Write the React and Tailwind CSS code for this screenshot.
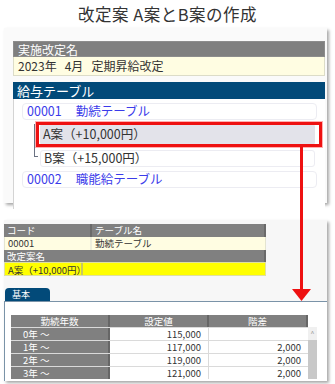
const FONT = { fontFamily: '"Noto Sans CJK JP", "Noto Sans", sans-serif' };

const ROWS = [
  { year: '0年 ～', value: '115,000', diff: '' },
  { year: '1年 ～', value: '117,000', diff: '2,000' },
  { year: '2年 ～', value: '119,000', diff: '2,000' },
  { year: '3年 ～', value: '121,000', diff: '2,000' },
];

function CodeItem({ children }) {
  return (
    <div className="mx-[8px] h-[17px] flex items-center pl-[4px] rounded-[4px] border border-[#ececf2] bg-white text-[12.5px] text-[#3b3bea]">
      <span className="whitespace-pre">{children}</span>
    </div>
  );
}

export default function App() {
  return (
    <div className="w-[335px] h-[384px] bg-white relative overflow-hidden" style={FONT}>
      {/* Title */}
      <div className="h-[28px] flex items-center justify-center text-[16.5px] text-[#333] tracking-[0.5px]">
        改定案 A案とB案の作成
      </div>

      {/* Upper panel */}
      <div className="ml-[4px] w-[323px] h-[175px] bg-[#fafafa] shadow-[2px_2px_3px_rgba(0,0,0,0.35)] pt-[13px] pl-[9px] pr-[2px]">
        <div className="h-[16px] bg-[#7f7f7f] text-white text-[12px] leading-[16px] pl-[4px] border border-[#8c8c8c]">
          実施改定名
        </div>
        <div className="h-[19px] bg-[#fffde2] border border-[#dcdcc8] border-t-0 text-[12px] leading-[18px] text-[#333] pl-[4px] whitespace-pre">
          {'2023年   4月   定期昇給改定'}
        </div>
        <div className="mt-[6px] h-[17px] bg-[#024a79] text-white text-[13px] leading-[17px] pl-[4px]">
          給与テーブル
        </div>
        <div className="border-l border-[#d4d4d4] bg-white h-[110px] pt-[4px] flex flex-col">
          <CodeItem>{'00001     勤続テーブル'}</CodeItem>

          {/* Tree of 改定案 */}
          <div className="mt-[4px] flex pl-[20px] pr-[10px]">
            <div className="w-[5px] shrink-0 relative">
              <div className="absolute left-0 top-0 h-[33px] border-l border-gray-500" />
              <div className="absolute left-0 top-[11px] w-[5px] border-t border-gray-500" />
              <div className="absolute left-0 top-[32px] w-[4px] border-t border-gray-500" />
            </div>
            <div className="flex-1 flex flex-col gap-[5px] pl-[1px]">
              <div className="h-[21px] flex items-center pl-[3px] rounded-[3px] bg-[#e3e3ea] text-[12.5px] text-[#333]">
                A案（+10,000円）
              </div>
              <div className="h-[17px] flex items-center pl-[3px] rounded-[3px] border border-[#ececf2] bg-white text-[12.5px] text-[#333]">
                B案（+15,000円）
              </div>
            </div>
          </div>

          <div className="mt-[4px]">
            <CodeItem>{'00002     職能給テーブル'}</CodeItem>
          </div>
        </div>
      </div>

      {/* Lower panel */}
      <div className="mt-[17px] ml-[4px] w-[323px] h-[161px] bg-[#f7f7f7] shadow-[2px_2px_3px_rgba(0,0,0,0.35)] pt-[4px] flex flex-col">
        <div className="w-[262px] text-[9.5px]">
          <div className="flex h-[13px] bg-[#808080] text-white leading-[13px]">
            <div className="w-[88px] pl-[3px] border-r-2 border-[#6a6a6a]">コード</div>
            <div className="flex-1 pl-[3px] border-r-2 border-[#6a6a6a]">テーブル名</div>
          </div>
          <div className="flex h-[13px] bg-[#fffde2] text-[#333] leading-[13px] border-x border-[#e4e4d0]">
            <div className="w-[87px] pl-[3px] border-r-2 border-[#eeeedc]">00001</div>
            <div className="flex-1 pl-[3px]">勤続テーブル</div>
          </div>
          <div className="h-[12px] bg-[#808080] text-white leading-[12px] pl-[3px] border-r-2 border-[#6a6a6a]">
            改定案名
          </div>
          <div className="flex h-[14px] bg-[#ffff00] text-[#333] leading-[14px] border border-[#e0e0a0]">
            <div className="w-[78px] pl-[3px] border-r-2 border-[#c8c860] whitespace-nowrap">A案（+10,000円）</div>
            <div className="flex-1" />
          </div>
        </div>

        <div className="mt-[12px] ml-[1px] w-[45px] h-[13px] bg-[#024a79] rounded-t-[4px] text-white text-[9px] leading-[13px] pl-[7px]">
          基本
        </div>
        <div className="flex-1 bg-white border-t border-l border-[#7a93a8] pt-[13px] pl-[6px]">
          <div className="flex">
            <div className="w-[297px] text-[9.5px]">
              <div className="flex h-[12px] bg-[#808080] text-white leading-[12px] text-center">
                <div className="w-[99px] border-r-2 border-[#666]">勤続年数</div>
                <div className="w-[99px] border-r-2 border-[#666]">設定値</div>
                <div className="flex-1 border-r-2 border-[#666]">階差</div>
              </div>
              {ROWS.map((r) => (
                <div key={r.year} className="flex h-[13px] leading-[12px] border-t border-[#dadada]">
                  <div className="w-[99px] bg-[#808080] text-white pl-[12px] border-r-2 border-[#666]">{r.year}</div>
                  <div className="w-[99px] text-right pr-[7px] text-[#333] border-r border-[#dadada]">{r.value}</div>
                  <div className="flex-1 text-right pr-[7px] text-[#333]">{r.diff}</div>
                </div>
              ))}
            </div>
            <div className="w-[9px] mt-[12px] flex flex-col">
              <div className="h-[13px] bg-[#f0f0f0] text-[7px] text-[#999] text-center leading-[13px]">^</div>
              <div className="flex-1 bg-[#c8c8c8]" />
            </div>
          </div>
        </div>
      </div>

      {/* Annotation: red highlight box */}
      <div className="absolute left-[36px] top-[122px] w-[286px] h-[25px] border-[3px] border-[#ee1111] outline outline-1 outline-[#ffb0b0]" />

      {/* Annotation: arrow */}
      <div className="absolute left-[300px] top-[147px] w-[3px] h-[145px] bg-[#ee1111]" />
      <svg className="absolute left-[292px] top-[289px]" width="19" height="12" viewBox="0 0 19 12">
        <polygon points="0,0 19,0 9.5,12" fill="#ee1111" />
      </svg>
    </div>
  );
}
